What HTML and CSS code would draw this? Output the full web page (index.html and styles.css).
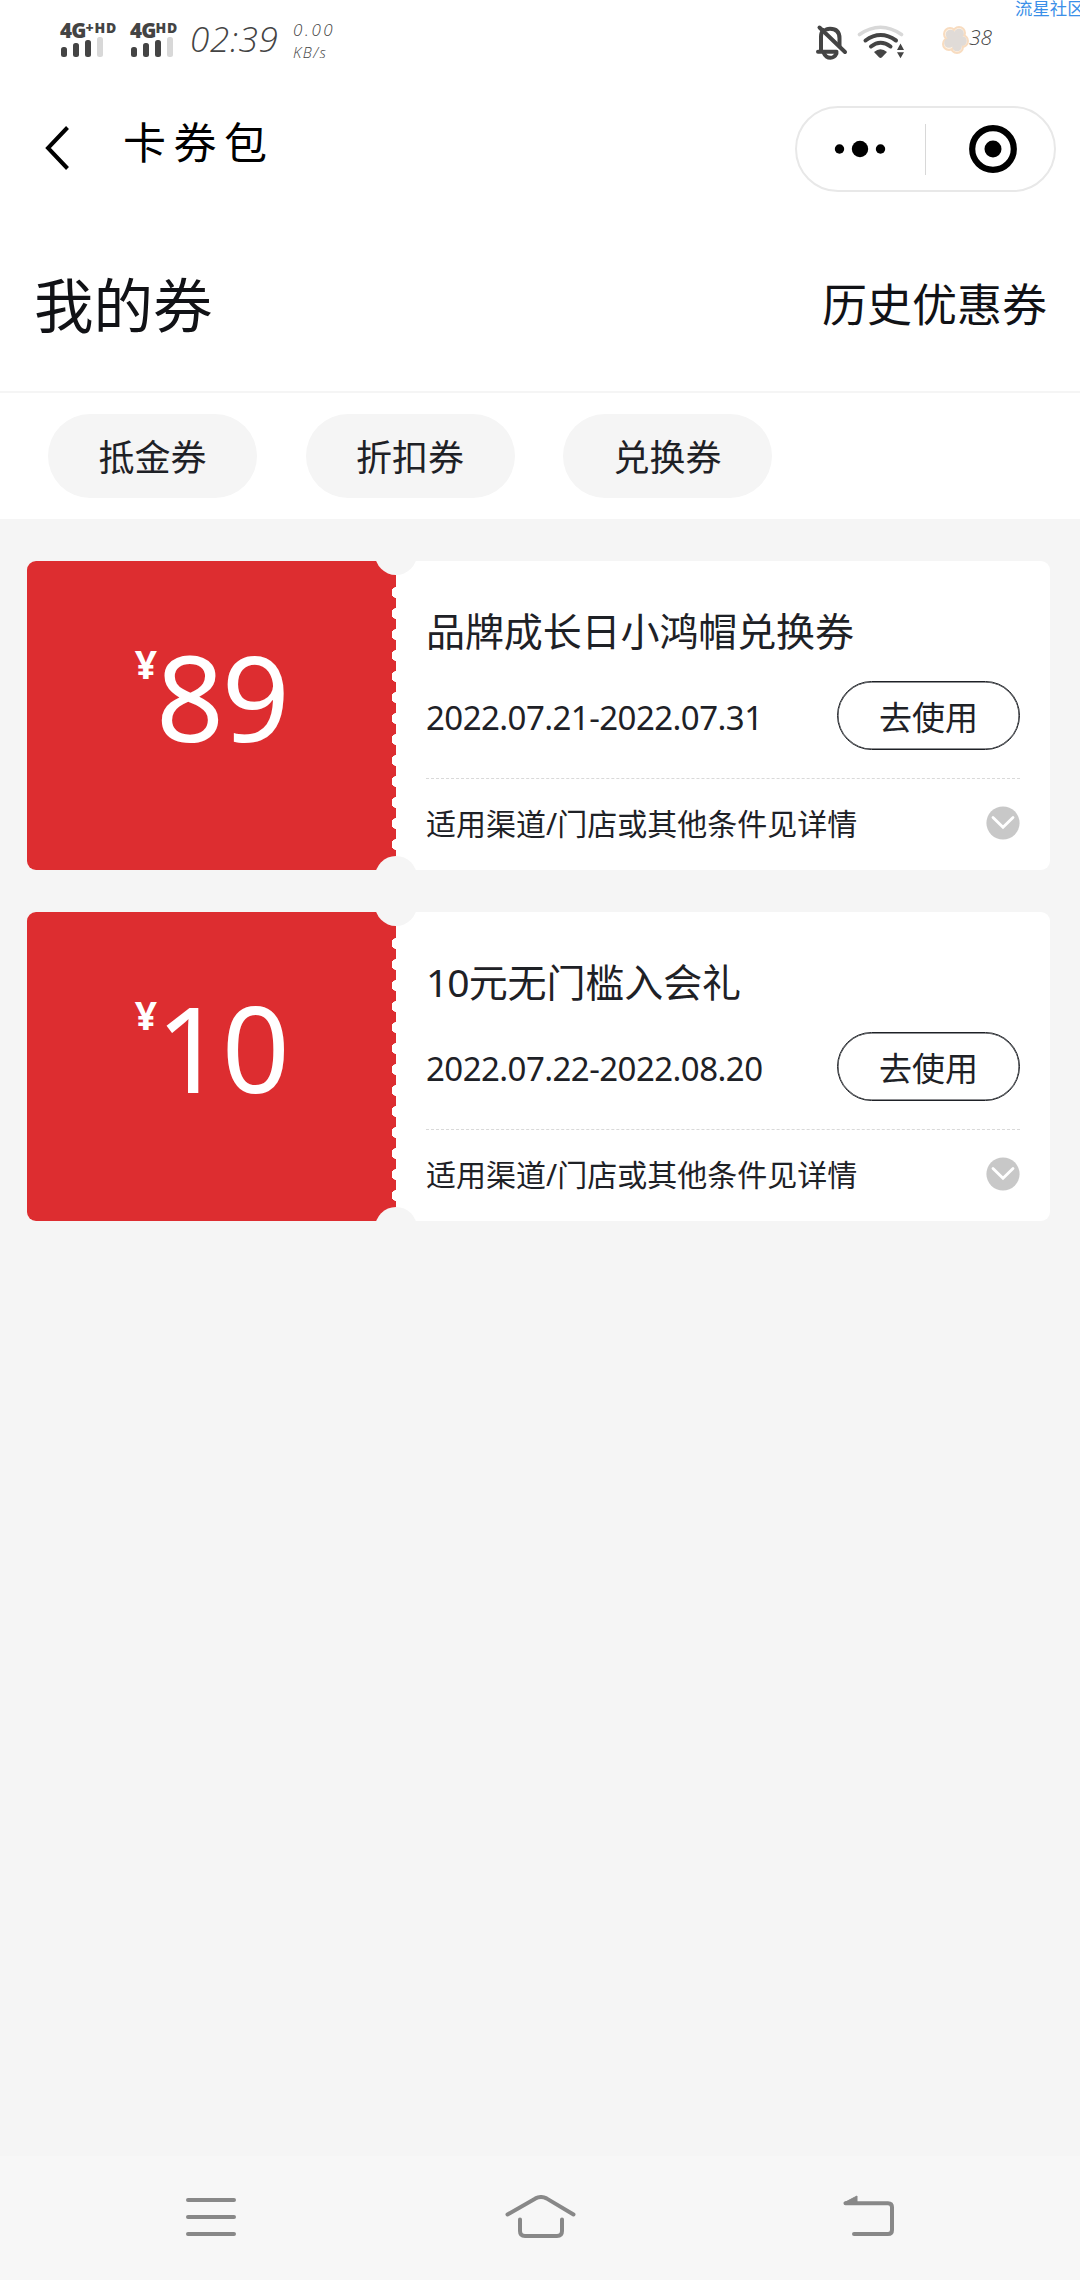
FILE: index.html
```html
<!DOCTYPE html>
<html lang="zh-CN">
<head>
<meta charset="utf-8">
<title>卡券包</title>
<link rel="stylesheet" href="styles.css">
</head>
<body>
<div class="screen">
  <span class="watermark">流星社区</span>
  <header class="status">
    <div class="sim sim-plus">
      <div class="net">4G<span class="sup">+HD</span></div>
      <div class="bars"><i class="b1"></i><i class="b2"></i><i class="b3"></i><i class="b4"></i></div>
    </div>
    <div class="sim">
      <div class="net">4G<span class="sup">HD</span></div>
      <div class="bars"><i class="b1"></i><i class="b2"></i><i class="b3"></i><i class="b4"></i></div>
    </div>
    <div class="time">02:39</div>
    <div class="speed"><span>0.00</span><span class="unit">KB/s</span></div>
    <svg class="status-icons" width="92" height="40" viewBox="814 22 92 40" fill="none">
      <g stroke="#444" stroke-width="4" stroke-linecap="round">
        <path d="M821 51V36.500q0-4 2.500-6.500M826.500 29.300q1.500-.6 3.500-.6 9.500 0 9.500 9.500v7.500M818 51.700h18.500"/>
        <path d="M823.800 53q2 4.800 6.700 4.800 4 0 6-4.300"/>
        <path d="M819.500 27.500l25.500 24.500"/>
      </g>
      <g stroke-linecap="round">
        <path d="M859.500 34.500q21-14.500 42 0" stroke="#d8d8d8" stroke-width="3.600"/>
        <path d="M865.500 40.500q15-11 30.500 0" stroke="#444" stroke-width="4"/>
        <path d="M871 46.500q9.500-7.500 19.500 0" stroke="#444" stroke-width="4"/>
      </g>
      <path d="M874 52q6.500-5.500 13 0l-5 5.300q-1.500 1.200-3 0z" fill="#444"/>
      <path d="M900.500 43.500l3.500 6.500h-7zM900.500 58.200l3.500-6h-7z" fill="#444"/>
    </svg>
    <div class="battery">
      <svg width="28" height="28" viewBox="0 0 28 28">
        <g fill="#fff3e4" stroke="#f8dcc0" stroke-width="2"><circle cx="9" cy="8" r="6"/><circle cx="18" cy="7" r="6"/><circle cx="21" cy="15" r="6"/><circle cx="16" cy="21" r="6"/><circle cx="8" cy="18" r="6"/></g>
        <g fill="#e0dbd7"><circle cx="9.500" cy="8.500" r="4.800"/><circle cx="18" cy="7.500" r="4.800"/><circle cx="21" cy="15" r="4.800"/><circle cx="16" cy="20.500" r="4.800"/><circle cx="8" cy="17" r="4.800"/><circle cx="14" cy="14" r="5"/></g>
      </svg>
      <span>38</span>
    </div>
  </header>

  <nav class="navbar">
    <svg class="back" width="26" height="48" viewBox="0 0 26 48" fill="none" stroke="#000" stroke-width="4"><path d="M22.500 3.500L3 24l19.500 20.500"/></svg>
    <h1>卡券包</h1>
    <div class="capsule">
      <svg width="52" height="18" viewBox="0 0 52 18"><circle cx="5.500" cy="9" r="4.700"/><circle cx="26" cy="9" r="8.200"/><circle cx="46.500" cy="9" r="4.700"/></svg>
      <span class="split"></span>
      <svg width="48" height="48" viewBox="0 0 48 48"><circle cx="24" cy="24" r="20.800" fill="none" stroke="#000" stroke-width="6.200"/><circle cx="24" cy="24" r="8.500"/></svg>
    </div>
  </nav>

  <section class="heading">
    <h2>我的券</h2>
    <a class="history">历史优惠券</a>
  </section>

  <section class="filters">
    <button class="chip">抵金券</button>
    <button class="chip">折扣券</button>
    <button class="chip">兑换券</button>
  </section>

  <main class="coupons">
    <article class="coupon">
      <div class="stub"><span class="yen">¥</span><span class="amount">89</span></div>
      <div class="info">
        <h3>品牌成长日小鸿帽兑换券</h3>
        <div class="row">
          <span class="date">2022.07.21-2022.07.31</span>
          <button class="use">去使用</button>
        </div>
        <div class="detail">
          <span>适用渠道/门店或其他条件见详情</span>
          <svg width="34" height="34" viewBox="0 0 34 34" fill="none"><circle cx="17" cy="17" r="16.600" fill="#c8c8c8"/><path d="M7 11.500l10 9.800 10-9.800" stroke="#fff" stroke-width="2.800" stroke-linecap="round"/></svg>
        </div>
      </div>
    </article>
    <article class="coupon">
      <div class="stub"><span class="yen">¥</span><span class="amount">10</span></div>
      <div class="info">
        <h3><span class="num">10</span>元无门槛入会礼</h3>
        <div class="row">
          <span class="date">2022.07.22-2022.08.20</span>
          <button class="use">去使用</button>
        </div>
        <div class="detail">
          <span>适用渠道/门店或其他条件见详情</span>
          <svg width="34" height="34" viewBox="0 0 34 34" fill="none"><circle cx="17" cy="17" r="16.600" fill="#c8c8c8"/><path d="M7 11.500l10 9.800 10-9.800" stroke="#fff" stroke-width="2.800" stroke-linecap="round"/></svg>
        </div>
      </div>
    </article>
  </main>

  <footer class="sysnav">
    <svg width="50" height="44" viewBox="0 0 50 44" stroke="#888" stroke-width="4" stroke-linecap="round"><path d="M2 5h46M2 22h46M2 39h46"/></svg>
    <svg width="72" height="44" viewBox="0 0 72 44" fill="none" stroke="#888" stroke-width="4" stroke-linecap="round"><path d="M3.500 19.500L31.500 3.400q5.500-2.800 11 0L69.500 19.500M16 24.500V36q0 5 5 5h32q5 0 5-5V24.500"/></svg>
    <svg width="52" height="44" viewBox="0 0 52 44" fill="none" stroke="#888" stroke-width="4" stroke-linecap="round"><path d="M2.500 8.200H45q4 0 4 4V35q0 4-4 4H11"/><path d="M1.500 7.500L14 1v8H2z" fill="#888" stroke-width="1"/></svg>
  </footer>
</div>
</body>
</html>
```
FILE: styles.css
```css
* { box-sizing: border-box; }

body {
  margin: 0;
  background: #f5f5f5;
  color: #1e2126;
  font-family: "Noto Sans", "Noto Sans CJK SC", sans-serif;
}

h1, h2, h3 { margin: 0; font-weight: 400; }
button { padding: 0; font: inherit; color: inherit; }
svg { display: block; flex: none; }

.screen {
  position: relative;
  width: 1080px;
  height: 2280px;
  display: flex;
  flex-direction: column;
  overflow: hidden;
}

.watermark {
  position: absolute;
  left: 1015px;
  top: -5px;
  font: 17.400px/25px "Noto Sans CJK SC", sans-serif;
  color: #3b8fe8;
  white-space: nowrap;
}

/* status bar */
.status {
  height: 86px;
  padding: 20px 0 0 60px;
  display: flex;
  align-items: flex-start;
  background: #fff;
  color: #444;
}

.sim { width: 60px; }
.sim-plus { width: 70px; }

.net {
  display: flex;
  align-items: flex-start;
  height: 18px;
  font: 800 20.500px/20px "Open Sans", sans-serif;
  letter-spacing: -0.8px;
}

.sup { font-size: 14px; line-height: 15px; letter-spacing: 0.700px; }

.bars {
  display: flex;
  align-items: flex-end;
  gap: 6px;
  height: 19px;
  padding-left: 1px;
}

.bars i { width: 6px; border-radius: 2.500px; background: #444; }
.bars .b1 { height: 10px; }
.bars .b2 { height: 14px; }
.bars .b3 { height: 17px; }
.bars .b4 { height: 20px; background: #d8d8d8; }

.time {
  width: 103px;
  font: italic 300 35px/38px "Open Sans", sans-serif;
  letter-spacing: 0.700px;
}

.speed {
  display: flex;
  flex-direction: column;
  width: 521px;
  font: italic 300 17px/20px "Open Sans", sans-serif;
  letter-spacing: 2.600px;
}

.speed .unit { font-size: 15px; line-height: 25px; letter-spacing: 1.500px; }

.status-icons { margin-top: 2px; }

.battery {
  display: flex;
  margin: 6px 0 0 35px;
  font: italic 300 21px/26px "Open Sans", sans-serif;
}

.battery span { margin-top: -2px; }

/* mini-program title bar */
.navbar {
  height: 124px;
  padding: 20px 24px 0 45px;
  display: flex;
  align-items: flex-start;
  background: #fff;
  color: #000;
}

.back { margin-top: 18px; }

h1 {
  flex: 1;
  padding-left: 52px;
  font: 400 43px/68px "Noto Sans CJK SC", sans-serif;
  letter-spacing: 7.500px;
}

.capsule {
  display: flex;
  align-items: center;
  width: 261px;
  height: 86px;
  padding-left: 37px;
  border: 2px solid #e8e8e8;
  border-radius: 43px;
}

.split { width: 1px; height: 51px; margin: 0 43px 0 39px; background: #d8d8d8; }

/* page heading */
.heading {
  height: 183px;
  padding: 10px 33px 0 34px;
  display: flex;
  justify-content: space-between;
  align-items: flex-start;
  background: #fff;
  border-bottom: 2px solid #f5f5f5;
  color: #111216;
}

h2 { font-size: 59.500px; line-height: 170px; }
.history { font-size: 45px; line-height: 170px; }

/* category filters */
.filters {
  display: flex;
  gap: 48.500px;
  height: 126px;
  padding: 21px 48px 0;
  background: #fff;
}

.chip {
  width: 209px;
  height: 84px;
  padding-bottom: 1px;
  border: 0;
  border-radius: 42px;
  background: #f5f5f5;
  font-size: 36px;
}

/* coupon list */
.coupons {
  flex: 1;
  display: flex;
  flex-direction: column;
  gap: 42px;
  padding: 42px 30px 0 27px;
}

.coupon {
  position: relative;
  display: flex;
  height: 309px;
  border-radius: 9px;
  background: #fff;
  overflow: hidden;
}

/* half-round notches where the stub meets the body */
.coupon::before,
.coupon::after {
  content: "";
  position: absolute;
  z-index: 1;
  left: 348px;
  width: 42px;
  height: 42px;
  border-radius: 50%;
  background: #f5f5f5;
}

.coupon::before { top: -28px; }
.coupon::after { bottom: -28px; }

.stub {
  position: relative;
  display: flex;
  justify-content: center;
  width: 369px;
  padding-top: 65px;
  background: #dd2d30;
  color: #fff;
}

/* perforated edge */
.stub::after {
  content: "";
  position: absolute;
  right: 0;
  top: 20.500px;
  width: 4px;
  height: 273px;
  background: radial-gradient(circle 5.700px at 5px 10.500px, #fff 5.400px, transparent 5.900px) 0 0 / 4px 21px;
}

.yen { font-size: 39px; font-weight: 700; line-height: 76px; }

.amount {
  margin: -12px 1px 0 -1px;
  font-size: 119px;
  line-height: 164px;
  letter-spacing: -2.500px;
}

.info { flex: 1; padding: 41px 30px 0 30px; }

h3 { font-size: 39px; line-height: 58px; letter-spacing: -0.100px; }
.num { letter-spacing: -1px; }

.row {
  display: flex;
  justify-content: space-between;
  height: 118px;
  padding-top: 21px;
}

.date { font-size: 33px; line-height: 73px; letter-spacing: -0.550px; }

.use {
  width: 183px;
  height: 69px;
  border: 1px solid #1e2126;
  border-radius: 34.500px;
  background: #fff;
  box-shadow: inset 0 0 0 0.500px #1e2126;
  font-size: 33px;
}

.detail {
  display: flex;
  justify-content: space-between;
  align-items: center;
  height: 88px;
  border-top: 1px dashed #d9d9d9;
  font-size: 30px;
}

.detail span { margin-top: -2px; }

/* system navigation */
.sysnav {
  display: flex;
  justify-content: space-between;
  align-items: flex-start;
  height: 124px;
  padding: 39px 185px 0 186px;
  background: #f7f7f7;
}
```
